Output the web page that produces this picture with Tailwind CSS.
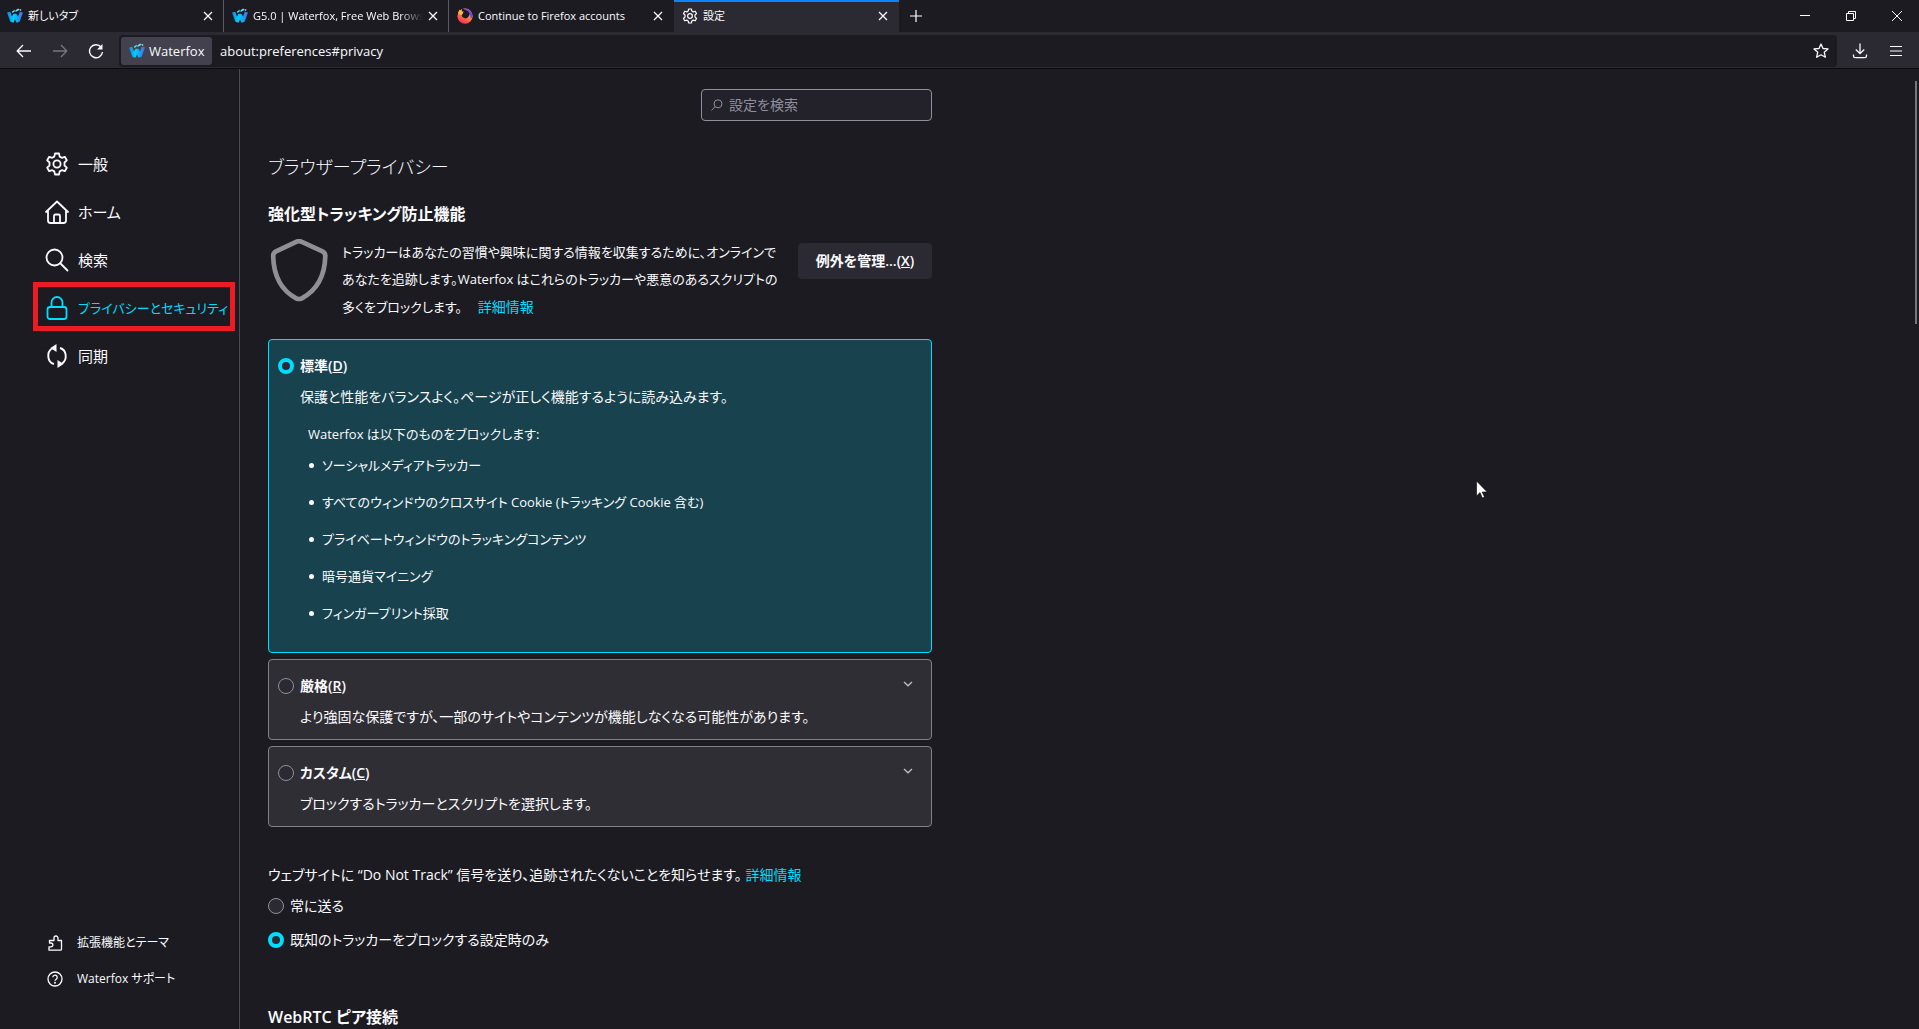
<!DOCTYPE html>
<html lang="ja">
<head>
<meta charset="utf-8">
<meta name="viewport" content="width=device-width, initial-scale=1">
<title>設定</title>
<script src="https://cdn.jsdelivr.net/npm/@tailwindcss/browser@4"></script>
</head>
<body class="flex h-screen flex-col overflow-hidden bg-[#1c1b22] font-['Open_Sans','Noto_Sans_CJK_JP',sans-serif] text-[14px] leading-6 text-[#fbfbfe] [font-feature-settings:'palt']">

<svg class="absolute size-0" aria-hidden="true">
  <defs>
    <linearGradient id="wf" x1="0" y1="0" x2="1" y2="0"><stop offset="0" stop-color="#1a7fe0"/><stop offset=".4" stop-color="#00d0ff"/><stop offset=".65" stop-color="#12a8f5"/><stop offset="1" stop-color="#5a62e0"/></linearGradient>
    <linearGradient id="ff" x1=".8" y1="0" x2=".3" y2="1"><stop offset="0" stop-color="#ffe14a"/><stop offset=".45" stop-color="#ff8a3c"/><stop offset="1" stop-color="#f5285a"/></linearGradient>
    <linearGradient id="fp" x1="0" y1="0" x2="1" y2="1"><stop offset="0" stop-color="#a03be0"/><stop offset="1" stop-color="#5b4ae8"/></linearGradient>
  </defs>
  <symbol id="waterfox" viewBox="0 0 16 16">
    <path fill="url(#wf)" d="M0 4.600 3.200 3.800 5 8.600 6.600 5.800h2.800L11 8.600 12.800 3.800 16 4.400 12.600 13.800l-3 .9L8 11.300l-1.600 3.400-3-.9z"/>
    <path fill="#5fe3f5" d="M5 3.600 8 1.600l-.6 2.200L5.400 5zM8.400 2.400l2.600-1.800 1.800.8L10.600 3 8.400 4z"/>
    <path fill="#a5f3ff" d="M12.800 1.300h1.400v1.400h-1.400z"/>
  </symbol>
  <symbol id="firefox" viewBox="0 0 16 16">
    <circle cx="8" cy="8.200" r="7.600" fill="url(#ff)"/>
    <path fill="url(#fp)" d="M6.500.6C11 .2 15.500 3.200 15.400 8c-.3 1.500-.9 2.300-1.800 2.800C14 7.500 12 4.500 6.500 3z"/>
    <path fill="#1c1b22" d="M5 .2 10.500 3a3.900 3.900 0 1 1-5.500 1.500z"/>
    <path fill="#ffb545" d="M1 5 2.500 1.600l1.300 1.600L6.500 3.500 6 5.200l-1.600 2.300z"/>
  </symbol>
  <symbol id="gear" viewBox="0 0 24 24">
    <g fill="none" stroke="currentColor" stroke-width="1.800" stroke-linejoin="round">
      <path d="M10 1.500h4l.7 3.100 2.100 1.200 3-1 2 3.500-2.300 2.200v3l2.300 2.200-2 3.500-3-1-2.100 1.200-.7 3.100h-4l-.7-3.100-2.100-1.200-3 1-2-3.500 2.300-2.200v-3L2.200 8.300l2-3.500 3 1 2.100-1.200z"/>
      <circle cx="12" cy="12" r="3.600"/>
    </g>
  </symbol>
  <symbol id="x" viewBox="0 0 10 10"><path d="M1 1l8 8M9 1L1 9" fill="none" stroke="currentColor" stroke-width="1.300"/></symbol>
  <symbol id="chevron" viewBox="0 0 10 6"><path d="M1 1l4 3.800L9 1" fill="none" stroke="currentColor" stroke-width="1.300"/></symbol>
</svg>

<!-- Tab strip -->
<header class="flex h-8 shrink-0 items-stretch text-[11px]">
  <div class="flex w-56 items-center gap-[5px] border-r border-[#5b5b66] pr-[10px] pl-[7px]">
    <svg class="size-4 shrink-0"><use href="#waterfox"/></svg>
    <span class="min-w-0 flex-1 whitespace-nowrap">新しいタブ</span>
    <button aria-label="タブを閉じる"><svg class="size-[10px]"><use href="#x"/></svg></button>
  </div>
  <div class="flex w-[225px] items-center gap-[5px] border-r border-[#5b5b66] pr-[10px] pl-2">
    <svg class="size-4 shrink-0"><use href="#waterfox"/></svg>
    <span class="min-w-0 flex-1 overflow-hidden whitespace-nowrap [mask-image:linear-gradient(to_left,transparent,black_24px)]">G5.0 | Waterfox, Free Web Browser</span>
    <button aria-label="タブを閉じる"><svg class="size-[10px]"><use href="#x"/></svg></button>
  </div>
  <div class="flex w-[225px] items-center gap-[5px] pr-[11px] pl-2">
    <svg class="size-4 shrink-0"><use href="#firefox"/></svg>
    <span class="min-w-0 flex-1 overflow-hidden whitespace-nowrap">Continue to Firefox accounts</span>
    <button aria-label="タブを閉じる"><svg class="size-[10px]"><use href="#x"/></svg></button>
  </div>
  <div class="flex w-[225px] items-center gap-[5px] border-t-2 border-[#0a84ff] bg-[#2b2a33] pr-[11px] pb-[2px] pl-2">
    <svg class="size-4 shrink-0"><use href="#gear"/></svg>
    <span class="min-w-0 flex-1">設定</span>
    <button aria-label="タブを閉じる"><svg class="size-[10px]"><use href="#x"/></svg></button>
  </div>
  <button class="flex w-[34px] items-center justify-center" aria-label="新しいタブ"><svg class="size-3" viewBox="0 0 12 12"><path d="M6 0v12M0 6h12" stroke="#fff" stroke-width="1.200"/></svg></button>
  <div class="ml-auto flex">
    <button class="flex w-[46px] items-center justify-center" aria-label="最小化"><svg class="size-[10px]" viewBox="0 0 10 10"><path d="M0 4.500h10" stroke="#fff"/></svg></button>
    <button class="flex w-[46px] items-center justify-center" aria-label="元に戻す"><svg class="size-[10px]" viewBox="0 0 10 10"><path d="M.5 2.500h7v7h-7zM2.500 2.500v-2h7v7h-2" fill="none" stroke="#fff"/></svg></button>
    <button class="flex w-[45px] items-center justify-center" aria-label="閉じる"><svg class="size-[10px]" viewBox="0 0 10 10"><path d="M0 0l10 10M10 0L0 10" stroke="#fff"/></svg></button>
  </div>
</header>

<!-- Navigation toolbar -->
<nav class="flex h-[37px] shrink-0 items-center border-b border-[#0c0c0d] bg-[#2b2a33] pt-[2px]">
  <div class="flex w-[119px] items-center pl-4">
    <button class="w-9" aria-label="戻る"><svg class="size-4" viewBox="0 0 16 16" fill="none" stroke="#fbfbfe" stroke-width="1.300"><path d="M15 8H1.500M7 2 1.200 8 7 14"/></svg></button>
    <button class="w-9" aria-label="進む"><svg class="size-4" viewBox="0 0 16 16" fill="none" stroke="#77767f" stroke-width="1.300"><path d="M1 8h13.500M9 2l5.800 6L9 14"/></svg></button>
    <button aria-label="再読み込み"><svg class="size-4" viewBox="0 0 16 16" fill="none" stroke="#fbfbfe" stroke-width="1.400"><path d="M13 4a6.500 6.500 0 1 0 1.500 5"/><path d="M14.500 1v5.500H9z" fill="#fbfbfe" stroke="none"/></svg></button>
  </div>
  <div class="flex h-8 flex-1 items-center rounded bg-[#1c1b22] pr-2 pl-[2px]">
    <button class="flex h-7 w-[91px] items-center gap-1 rounded-[3px] bg-[#42414d] pl-2 text-[13px]"><svg class="size-4"><use href="#waterfox"/></svg>Waterfox</button>
    <input class="ml-2 min-w-0 flex-1 bg-transparent text-[13px] outline-none" aria-label="アドレス" value="about:preferences#privacy">
    <button aria-label="ブックマーク"><svg class="size-4" viewBox="0 0 16 16" fill="none" stroke="#fbfbfe" stroke-width="1.300" stroke-linejoin="round"><path d="M8 1l2 4.500 5 .4-3.800 3.300 1.200 5L8 11.800l-4.400 2.400 1.200-5L1 5.900l5-.4z"/></svg></button>
  </div>
  <div class="flex items-center gap-[22px] pr-[17px] pl-[15px]">
    <button aria-label="ダウンロード"><svg class="size-4" viewBox="0 0 16 16" fill="none" stroke="#fbfbfe" stroke-width="1.300"><path d="M8 .5v10M3.800 6.500 8 10.700l4.200-4.200M1.500 11.500V13q0 1.700 1.700 1.700h9.600q1.700 0 1.700-1.700v-1.500"/></svg></button>
    <button aria-label="メニュー"><svg class="h-[10px] w-3" viewBox="0 0 12 10" stroke="#fbfbfe"><path d="M0 .5h12M0 5h12M0 9.500h12"/></svg></button>
  </div>
</nav>

<div class="relative flex min-h-0 flex-1">
  <!-- Categories -->
  <aside class="flex w-60 shrink-0 flex-col border-r border-[#4a4a52] pt-[71px] pb-8 whitespace-nowrap">
    <ul class="flex flex-col text-[15px]">
      <li><a href="#general" class="flex h-12 items-center gap-[9px] pl-[45px]"><svg class="size-6 shrink-0"><use href="#gear"/></svg>一般</a></li>
      <li><a href="#home" class="flex h-12 items-center gap-[9px] pl-[45px]"><svg class="size-6 shrink-0" viewBox="0 0 24 24" fill="none" stroke="currentColor" stroke-width="1.800" stroke-linejoin="round" stroke-linecap="round"><path d="M1 12 12 1.500 23 12M3 10.500V20.500Q3 23 5.500 23h13q2.500 0 2.500-2.500V10.500M9 23v-7q0-1.500 1.500-1.500h3q1.500 0 1.500 1.500v7"/></svg>ホーム</a></li>
      <li><a href="#search" class="flex h-12 items-center gap-[9px] pl-[45px]"><svg class="size-6 shrink-0" viewBox="0 0 24 24" fill="none" stroke="currentColor" stroke-width="1.800" stroke-linecap="round"><circle cx="9.500" cy="9.500" r="8"/><path d="m15.500 15.500 7 7"/></svg>検索</a></li>
      <li class="relative"><a href="#privacy" class="flex h-12 items-center gap-[9px] pl-[45px] text-[13px] text-[#00ddff]"><svg class="size-6 shrink-0" viewBox="0 0 24 24" fill="none" stroke="currentColor" stroke-width="1.800"><rect x="2.500" y="11" width="19" height="12" rx="2.500"/><path d="M6.500 11V6.500a5.500 5.500 0 0 1 11 0V11"/></svg>プライバシーとセキュリティ</a>
        <span class="pointer-events-none absolute top-[-2px] right-1 bottom-[1px] left-[33px] border-[5px] border-[#ed1c24]"></span></li>
      <li><a href="#sync" class="flex h-12 items-center gap-[9px] pl-[45px]"><svg class="size-6 shrink-0" viewBox="0 0 24 24" fill="none" stroke="currentColor" stroke-width="1.900"><path d="M9 20C2 18 1.500 8 7 4.500M15 4c7 2 7.500 12 2 15.500"/><path d="M11.500 0v8L5.500 4zM12.500 16v8l6-4z" fill="currentColor" stroke="none"/></svg>同期</a></li>
    </ul>
    <ul class="mt-auto flex flex-col text-[12px]">
      <li><a href="#addons" class="flex h-9 items-center gap-[14px] pl-[47px]"><svg class="size-4 shrink-0" viewBox="0 0 16 16" fill="none" stroke="currentColor" stroke-width="1.300" stroke-linejoin="round"><path d="M2 15.200h11.500q1 0 1-1V5.500H11V3a2 2 0 0 0-4 0v2.500H2.500V8H4a1.800 1.800 0 0 1 0 3.800H2z"/></svg>拡張機能とテーマ</a></li>
      <li><a href="#support" class="flex h-9 items-center gap-[14px] pl-[47px]"><svg class="size-4 shrink-0" viewBox="0 0 16 16" fill="none" stroke="currentColor" stroke-width="1.300"><circle cx="8" cy="8" r="7"/><path d="M5.800 6.300a2.200 2.200 0 1 1 3.400 1.900Q8 8.900 8 9.800"/><circle cx="8" cy="11.700" r=".4"/></svg>Waterfox サポート</a></li>
    </ul>
  </aside>

  <!-- Privacy pane -->
  <main class="min-w-0 flex-1 overflow-hidden pt-5 pl-7">
    <div class="flex w-full max-w-[664px] flex-col">
      <label class="flex h-8 w-[231px] items-center gap-[6px] self-end rounded border border-[#8f8f9d] bg-[#23222b] px-[9px]">
        <svg class="size-3 shrink-0" viewBox="0 0 12 12" fill="none" stroke="#8f8f9d"><circle cx="7" cy="4.800" r="4"/><path d="M4 7.700.5 11.500"/></svg>
        <input type="search" aria-label="設定を検索" placeholder="設定を検索" class="min-w-0 flex-1 bg-transparent text-[14px] outline-none placeholder:text-[#8f8f9d]">
      </label>
      <h1 class="mt-[31px] text-[18px] leading-[30px] font-light">ブラウザープライバシー</h1>
      <h2 class="mt-5 text-[16px] font-semibold">強化型トラッキング防止機能</h2>
      <div class="mt-[13px] flex items-start">
        <svg class="mr-3 h-[66px] w-[62px] shrink-0" viewBox="-1 0 66 70" fill="none" stroke="#8f8f94" stroke-width="5" stroke-linejoin="round"><path d="M29 3q3-1.500 6 0l22 10q3 1.500 3 5c-.5 20-8 36-25 45q-3 1.500-6 0C12 54 5 38 4.500 18q0-3.500 3-5z"/></svg>
        <p class="min-w-0 flex-1 text-[13px] leading-[27px] whitespace-nowrap">トラッカーはあなたの習慣や興味に関する情報を収集するために、オンラインで<br>あなたを追跡します。Waterfox はこれらのトラッカーや悪意のあるスクリプトの<br>多くをブロックします。<a href="#info" class="ml-4 text-[14px] text-[#00ddff]">詳細情報</a></p>
        <button class="mt-1 h-9 w-[134px] shrink-0 rounded bg-[#2b2a33] font-semibold">例外を管理...(<u>X</u>)</button>
      </div>

      <div class="mt-[18px] flex flex-col gap-[6px]">
        <section class="rounded-[4px] border border-[#00ddff] bg-[#18424e] pt-[14px] pr-6 pb-[27px] pl-[9px]">
          <label class="flex items-center gap-[6px] font-semibold"><input type="radio" name="etp" checked class="size-4 appearance-none rounded-full border border-[#8f8f9d] bg-[#2b2a33] checked:border-4 checked:border-[#00ddff]"><span>標準(<u>D</u>)</span></label>
          <p class="mt-[7px] ml-[22px]">保護と性能をバランスよく。ページが正しく機能するように読み込みます。</p>
          <p class="mt-[13px] ml-[30px] text-[13px]">Waterfox は以下のものをブロックします:</p>
          <ul class="mt-[7px] ml-[31px] flex flex-col gap-[13px] text-[13px]">
            <li class="flex items-center gap-2 before:size-[5px] before:rounded-full before:bg-[#fbfbfe]">ソーシャルメディアトラッカー</li>
            <li class="flex items-center gap-2 before:size-[5px] before:rounded-full before:bg-[#fbfbfe]">すべてのウィンドウのクロスサイト Cookie (トラッキング Cookie 含む)</li>
            <li class="flex items-center gap-2 before:size-[5px] before:rounded-full before:bg-[#fbfbfe]">プライベートウィンドウのトラッキングコンテンツ</li>
            <li class="flex items-center gap-2 before:size-[5px] before:rounded-full before:bg-[#fbfbfe]">暗号通貨マイニング</li>
            <li class="flex items-center gap-2 before:size-[5px] before:rounded-full before:bg-[#fbfbfe]">フィンガープリント採取</li>
          </ul>
        </section>
        <section class="rounded-[4px] border border-[#808086] bg-[#2f2e34] pt-[14px] pr-[18px] pb-[10px] pl-[9px]">
          <div class="flex items-center justify-between">
            <label class="flex items-center gap-[6px] font-semibold"><input type="radio" name="etp" class="size-4 appearance-none rounded-full border border-[#8f8f9d] bg-[#2b2a33]"><span>厳格(<u>R</u>)</span></label>
            <button aria-label="展開" class="pb-1 text-[#bfbfc9]"><svg class="h-[6px] w-[10px]"><use href="#chevron"/></svg></button>
          </div>
          <p class="mt-[7px] ml-[22px]">より強固な保護ですが、一部のサイトやコンテンツが機能しなくなる可能性があります。</p>
        </section>
        <section class="rounded-[4px] border border-[#808086] bg-[#2f2e34] pt-[14px] pr-[18px] pb-[10px] pl-[9px]">
          <div class="flex items-center justify-between">
            <label class="flex items-center gap-[6px] font-semibold"><input type="radio" name="etp" class="size-4 appearance-none rounded-full border border-[#8f8f9d] bg-[#2b2a33]"><span>カスタム(<u>C</u>)</span></label>
            <button aria-label="展開" class="pb-1 text-[#bfbfc9]"><svg class="h-[6px] w-[10px]"><use href="#chevron"/></svg></button>
          </div>
          <p class="mt-[7px] ml-[22px]">ブロックするトラッカーとスクリプトを選択します。</p>
        </section>
      </div>

      <p class="mt-9">ウェブサイトに “Do Not Track” 信号を送り、追跡されたくないことを知らせます。<a href="#dnt" class="ml-1 text-[#00ddff]">詳細情報</a></p>
      <label class="mt-[7px] flex items-center gap-[6px]"><input type="radio" name="dnt" class="size-4 appearance-none rounded-full border border-[#8f8f9d] bg-[#2b2a33]">常に送る</label>
      <label class="mt-[10px] flex items-center gap-[6px]"><input type="radio" name="dnt" checked class="size-4 appearance-none rounded-full border border-[#8f8f9d] bg-[#2b2a33] checked:border-4 checked:border-[#00ddff]">既知のトラッカーをブロックする設定時のみ</label>
      <h2 class="mt-[53px] text-[16px] font-semibold">WebRTC ピア接続</h2>
    </div>
  </main>

  <div class="absolute top-3 right-[2px] h-[243px] w-[2px] bg-[#76767c]"></div>
  <svg class="absolute top-[411px] left-[1476px] h-5 w-3" viewBox="0 0 12 20"><path d="M.5 1v15l3.500-3.400L6.300 18l2.200-1-2.300-5h5z" fill="#fff" stroke="#000" stroke-width=".6"/></svg>
</div>
</body>
</html>
